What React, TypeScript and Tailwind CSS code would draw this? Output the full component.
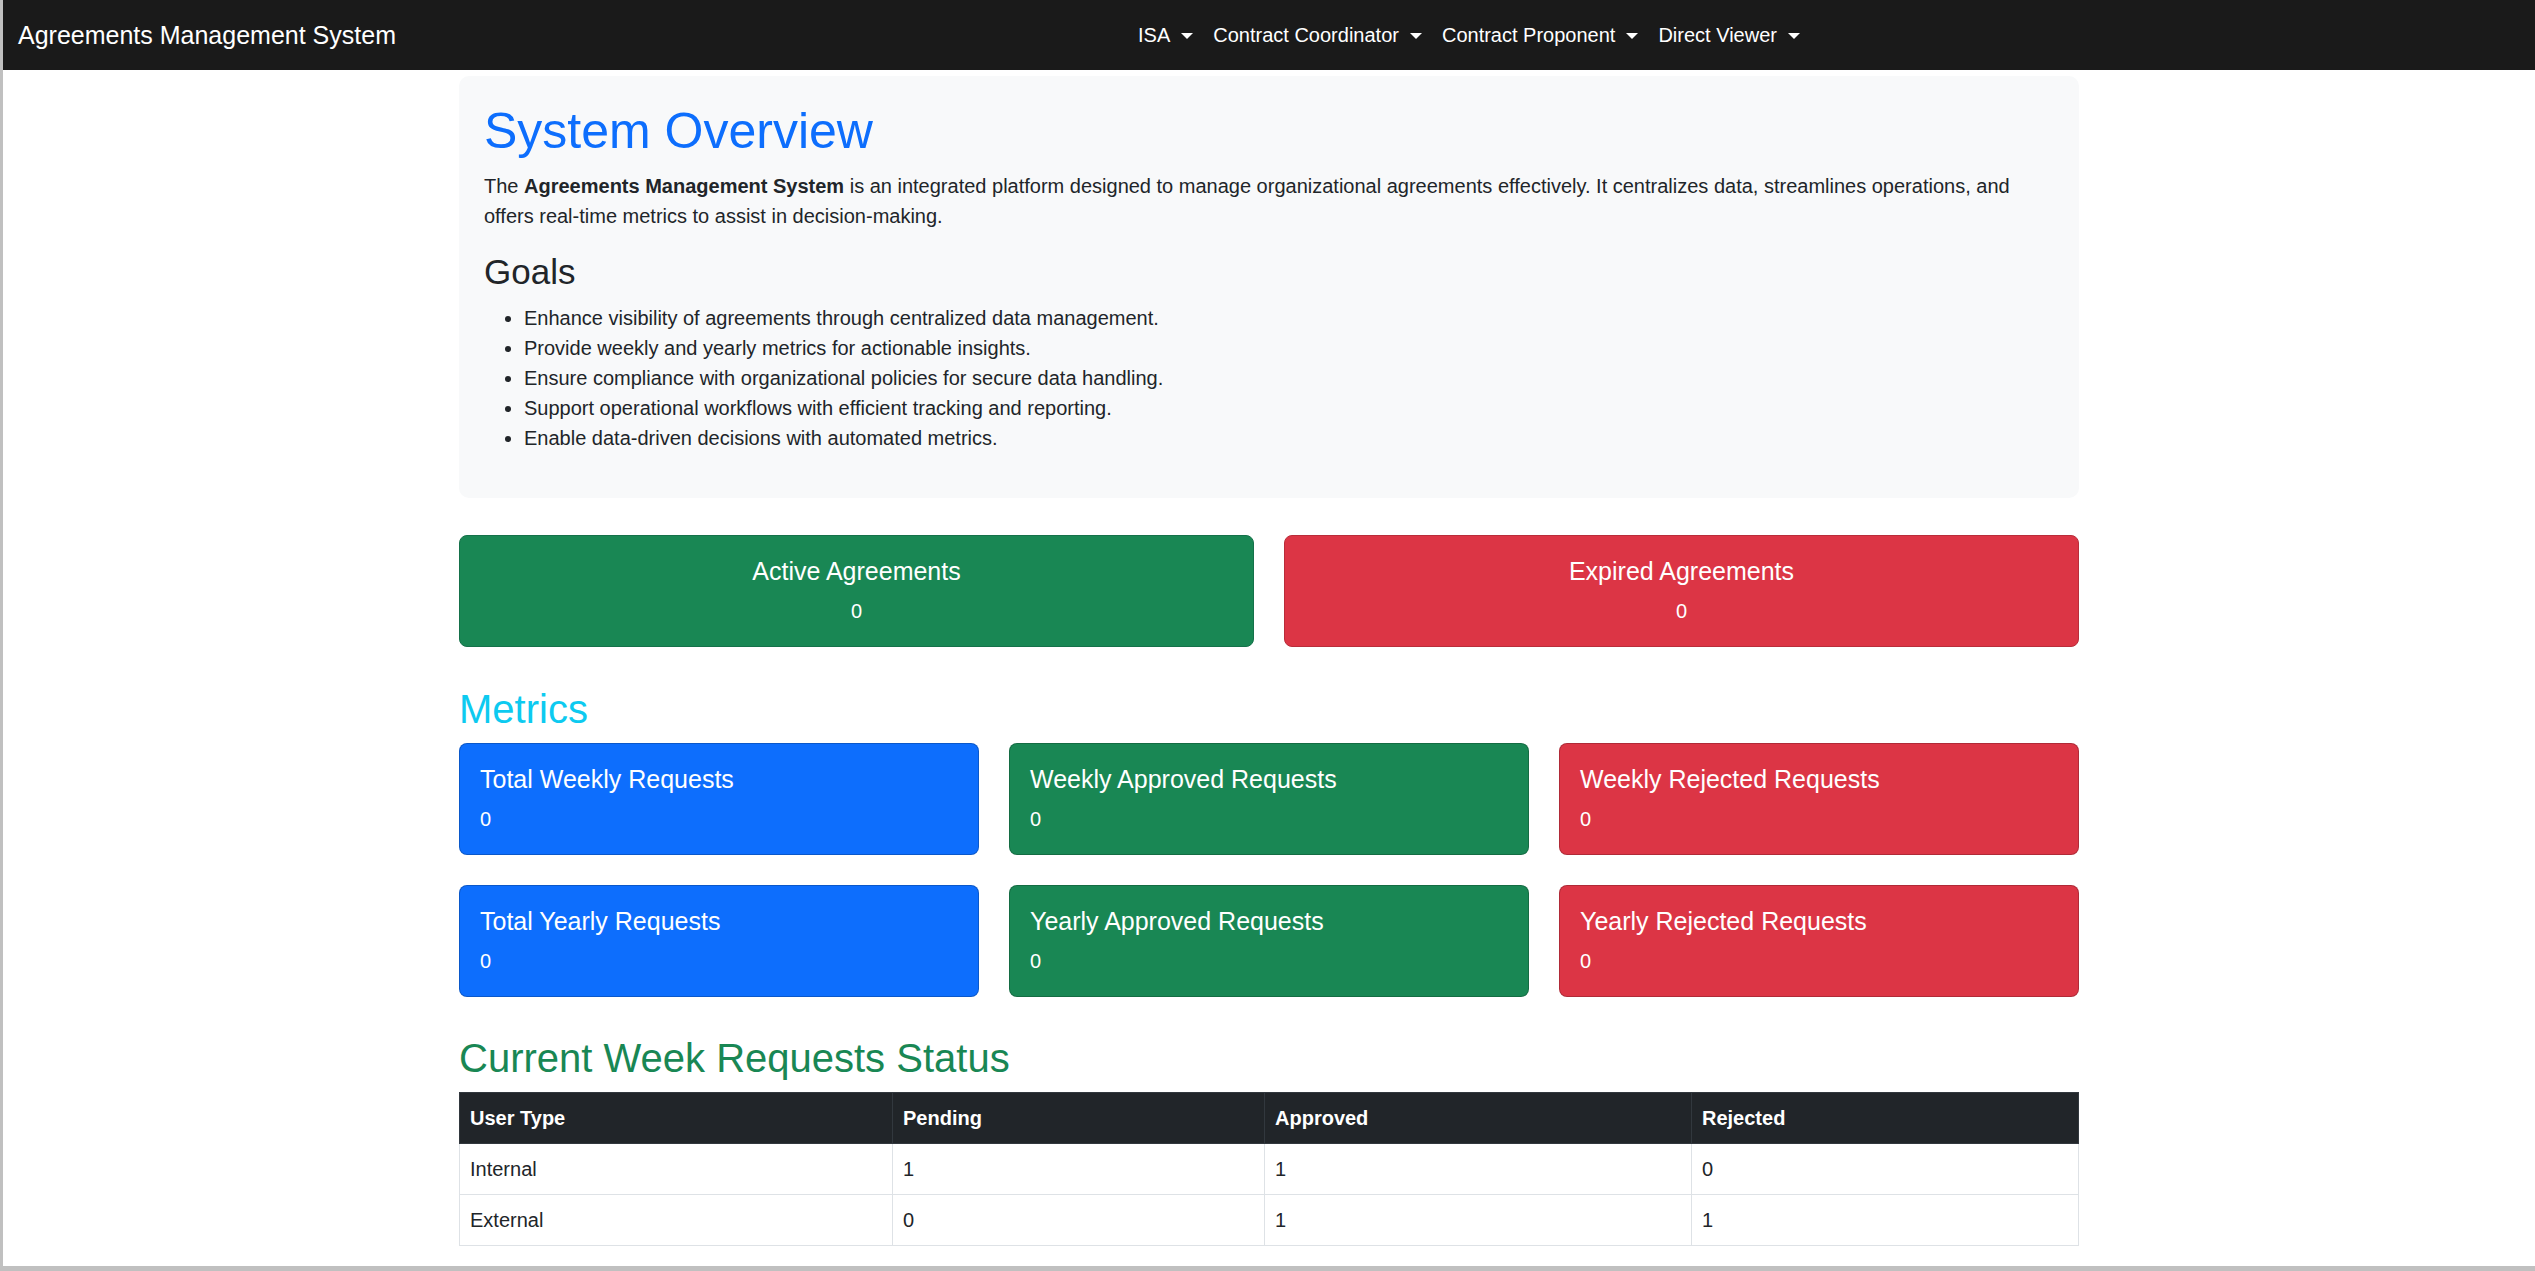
import React from "react";

const goals = [
  "Enhance visibility of agreements through centralized data management.",
  "Provide weekly and yearly metrics for actionable insights.",
  "Ensure compliance with organizational policies for secure data handling.",
  "Support operational workflows with efficient tracking and reporting.",
  "Enable data-driven decisions with automated metrics.",
];

const navItems = ["ISA", "Contract Coordinator", "Contract Proponent", "Direct Viewer"];

const metrics = [
  { title: "Total Weekly Requests", bg: "bg-[#0d6efd]" },
  { title: "Weekly Approved Requests", bg: "bg-[#198754]" },
  { title: "Weekly Rejected Requests", bg: "bg-[#dc3545]" },
  { title: "Total Yearly Requests", bg: "bg-[#0d6efd]" },
  { title: "Yearly Approved Requests", bg: "bg-[#198754]" },
  { title: "Yearly Rejected Requests", bg: "bg-[#dc3545]" },
];

const rows = [
  { type: "Internal", pending: 1, approved: 1, rejected: 0 },
  { type: "External", pending: 0, approved: 1, rejected: 1 },
];

function Caret() {
  return (
    <span className="ml-[11px] inline-block align-[3px] border-x-[6px] border-t-[6px] border-x-transparent border-t-white" />
  );
}

function Navbar() {
  return (
    <nav className="flex h-[70px] items-center bg-[#1a1a1a] px-[15px]">
      <span className="text-[25px] leading-[30px] text-white">Agreements Management System</span>
      <ul className="mx-auto flex items-center pl-[22px]">
        {navItems.map((item) => (
          <li key={item} className="px-[10px] text-[20px] leading-[30px] text-white">
            {item}
            <Caret />
          </li>
        ))}
      </ul>
    </nav>
  );
}

export default function App() {
  return (
    <div className="h-[1271px] w-full bg-[#c0c0c0] pb-[5px] pl-[3px] font-['Liberation_Sans',Arial,sans-serif] text-[#212529]">
      <div className="h-full overflow-hidden bg-white">
        <Navbar />

        <main className="mx-auto w-[1620px]">
          {/* overview */}
          <section className="mt-[6px] rounded-[10px] bg-[#f8f9fa] p-[25px]">
            <h1 className="mb-[10px] text-[50px] leading-[60px] text-[#0d6efd]">System Overview</h1>
            <p className="mb-[20px] text-[20px] leading-[30px]">
              The <b>Agreements Management System</b> is an integrated platform designed to manage organizational
              agreements effectively. It centralizes data, streamlines operations, and offers real-time metrics to assist
              in decision-making.
            </p>
            <h3 className="mb-[10px] text-[35px] leading-[42px]">Goals</h3>
            <ul className="mb-[20px] list-disc pl-[40px] text-[20px] leading-[30px]">
              {goals.map((g) => (
                <li key={g}>{g}</li>
              ))}
            </ul>
          </section>

          {/* agreements */}
          <div className="mt-[37px] grid grid-cols-2 gap-[30px]">
            <div className="rounded-[8px] border border-[#15714a] bg-[#198754] p-[20px] text-center text-white">
              <h5 className="mb-[10px] text-[25px] leading-[30px]">Active Agreements</h5>
              <p className="text-[20px] leading-[30px]">0</p>
            </div>
            <div className="rounded-[8px] border border-[#b92d3a] bg-[#dc3545] p-[20px] text-center text-white">
              <h5 className="mb-[10px] text-[25px] leading-[30px]">Expired Agreements</h5>
              <p className="text-[20px] leading-[30px]">0</p>
            </div>
          </div>

          {/* metrics */}
          <h2 className="mb-[10px] mt-[38px] text-[40px] leading-[48px] text-[#0dcaf0]">Metrics</h2>
          <div className="grid grid-cols-3 gap-x-[30px] gap-y-[30px]">
            {metrics.map((m) => (
              <div key={m.title} className={`rounded-[8px] border border-black/20 p-[20px] text-white ${m.bg}`}>
                <h5 className="mb-[10px] text-[25px] leading-[30px]">{m.title}</h5>
                <p className="text-[20px] leading-[30px]">0</p>
              </div>
            ))}
          </div>

          {/* weekly status */}
          <h2 className="mb-[10px] mt-[37px] text-[40px] leading-[48px] text-[#198754]">Current Week Requests Status</h2>
          <table className="w-full border-collapse text-left text-[20px] leading-[30px]">
            <thead>
              <tr className="bg-[#212529] text-white">
                <th className="w-[433px] border border-[#32383e] px-[10px] py-[10px] font-bold">User Type</th>
                <th className="w-[372px] border border-[#32383e] px-[10px] py-[10px] font-bold">Pending</th>
                <th className="w-[427px] border border-[#32383e] px-[10px] py-[10px] font-bold">Approved</th>
                <th className="border border-[#32383e] px-[10px] py-[10px] font-bold">Rejected</th>
              </tr>
            </thead>
            <tbody>
              {rows.map((r) => (
                <tr key={r.type}>
                  <td className="border border-[#dee2e6] px-[10px] py-[10px]">{r.type}</td>
                  <td className="border border-[#dee2e6] px-[10px] py-[10px]">{r.pending}</td>
                  <td className="border border-[#dee2e6] px-[10px] py-[10px]">{r.approved}</td>
                  <td className="border border-[#dee2e6] px-[10px] py-[10px]">{r.rejected}</td>
                </tr>
              ))}
            </tbody>
          </table>
        </main>
      </div>
    </div>
  );
}
